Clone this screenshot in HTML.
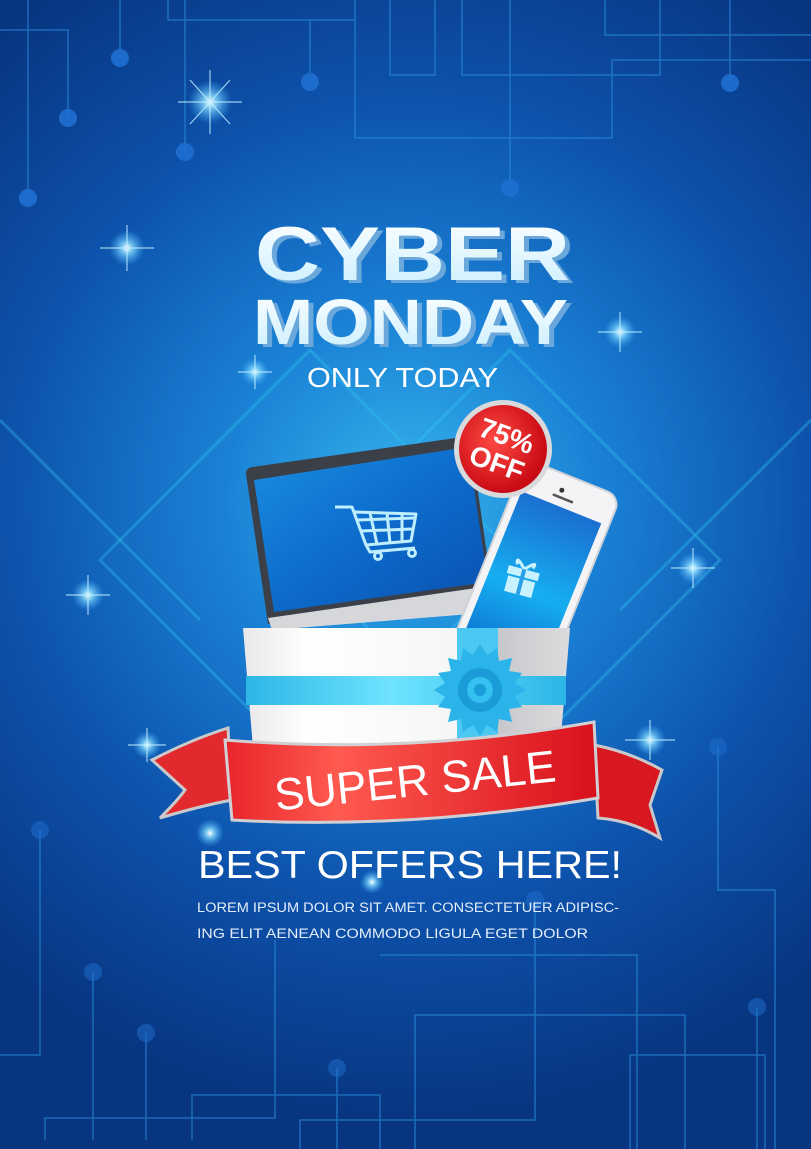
<!DOCTYPE html>
<html><head><meta charset="utf-8"><style>
html,body{margin:0;padding:0;background:#0b3d8c}
svg{display:block}
text{font-family:"Liberation Sans",Arial,sans-serif}
</style></head><body>
<svg width="811" height="1149" viewBox="0 0 811 1149" xmlns="http://www.w3.org/2000/svg">
<defs>
<radialGradient id="bg" cx="410" cy="500" r="620" gradientUnits="userSpaceOnUse">
<stop offset="0" stop-color="#36b4ec"/><stop offset="0.3" stop-color="#1a82d6"/><stop offset="0.65" stop-color="#0d52ac"/><stop offset="1" stop-color="#083580"/>
</radialGradient>
<radialGradient id="star" cx="0.5" cy="0.5" r="0.5"><stop offset="0" stop-color="#fff"/><stop offset="0.3" stop-color="#8fe0ff" stop-opacity="0.8"/><stop offset="1" stop-color="#3fb0ff" stop-opacity="0"/></radialGradient>
<linearGradient id="scr" x1="0" y1="0" x2="1" y2="1"><stop offset="0" stop-color="#1a8ee0"/><stop offset="0.5" stop-color="#0d6ccc"/><stop offset="1" stop-color="#0a4fae"/></linearGradient>
<linearGradient id="pscr" x1="0" y1="0" x2="0" y2="1"><stop offset="0" stop-color="#1a6fd0"/><stop offset="0.6" stop-color="#16aef0"/><stop offset="1" stop-color="#0f7bd6"/></linearGradient>
<linearGradient id="box" x1="0" y1="0" x2="1" y2="0"><stop offset="0" stop-color="#e8e8ea"/><stop offset="0.2" stop-color="#fff"/><stop offset="0.75" stop-color="#f4f4f4"/><stop offset="0.78" stop-color="#c8c8cc"/><stop offset="1" stop-color="#dcdcde"/></linearGradient>
<linearGradient id="band" x1="0" y1="0" x2="1" y2="0"><stop offset="0" stop-color="#2cb6e6"/><stop offset="0.45" stop-color="#6fe3ff"/><stop offset="1" stop-color="#2cb6e6"/></linearGradient>
<linearGradient id="red" x1="0" y1="0" x2="1" y2="0"><stop offset="0" stop-color="#e8242a"/><stop offset="0.3" stop-color="#ff5a50"/><stop offset="1" stop-color="#d8101c"/></linearGradient>
<radialGradient id="badge" cx="0.4" cy="0.4" r="0.6"><stop offset="0" stop-color="#ff4a44"/><stop offset="1" stop-color="#c80a14"/></radialGradient>
<linearGradient id="txt" x1="0" y1="0" x2="0" y2="1"><stop offset="0" stop-color="#ffffff"/><stop offset="1" stop-color="#c8eeff"/></linearGradient>
</defs>
<rect width="811" height="1149" fill="url(#bg)"/>
<g stroke="#35c8f0" stroke-opacity="0.35" stroke-width="3" fill="none">
<path d="M100 560 L310 350 L520 560 L310 770 Z"/>
<path d="M300 560 L510 350 L720 560 L510 770 Z"/>
<path d="M0 420 L200 620 M811 420 L620 610"/>
</g>
<g stroke="#2a8fe0" stroke-opacity="0.6" stroke-width="1.5" fill="none">
<path d="M28 0 V198 M0 30 H68 V118 M120 0 V58 M185 0 V152 M168 0 V20 H355 M310 20 V82 M355 0 V138 H612 V60 H811 M390 0 V75 H435 V0 M462 0 V75 H660 V0 M510 0 V188 M605 0 V35 H811 M730 0 V83"/>
<path d="M40 830 V1055 H0 M93 972 V1140 M146 1033 V1140 M45 1140 V1118 H275 V940 M192 1140 V1095 H380 V1149 M337 1068 V1149 M300 1149 V1120 H535 V900 M380 955 H637 V1149 M415 1149 V1015 H685 V1149 M630 1149 V1055 H765 V1149 M718 747 V890 H775 V1149 M757 1007 V1149"/>
</g>
<g fill="#1f6fd0" fill-opacity="0.9">
<circle cx="28" cy="198" r="9"/><circle cx="68" cy="118" r="9"/><circle cx="120" cy="58" r="9"/><circle cx="185" cy="152" r="9"/><circle cx="310" cy="82" r="9"/><circle cx="510" cy="188" r="9"/><circle cx="730" cy="83" r="9"/>
<circle cx="40" cy="830" r="9" fill-opacity="0.5"/><circle cx="93" cy="972" r="9" fill-opacity="0.5"/><circle cx="146" cy="1033" r="9" fill-opacity="0.5"/><circle cx="337" cy="1068" r="9" fill-opacity="0.5"/><circle cx="718" cy="747" r="9" fill-opacity="0.5"/><circle cx="757" cy="1007" r="9" fill-opacity="0.5"/><circle cx="535" cy="900" r="9" fill-opacity="0.5"/>
</g>
<g fill="url(#star)">
<circle cx="210" cy="102" r="22"/><circle cx="127" cy="248" r="18"/><circle cx="620" cy="332" r="16"/><circle cx="255" cy="372" r="14"/><circle cx="88" cy="595" r="16"/><circle cx="693" cy="568" r="16"/><circle cx="147" cy="745" r="14"/><circle cx="650" cy="740" r="16"/><circle cx="210" cy="833" r="14"/><circle cx="372" cy="882" r="12"/>
</g>
<g stroke="#bfefff" stroke-width="1.2" stroke-opacity="0.8">
<path d="M210 70 V134 M178 102 H242 M190 80 L230 124 M230 80 L190 124"/>
<path d="M127 225 V271 M100 248 H154"/><path d="M620 312 V352 M598 332 H642"/><path d="M88 575 V615 M66 595 H110"/><path d="M693 548 V588 M671 568 H715"/><path d="M650 720 V760 M625 740 H675"/><path d="M147 728 V762 M128 745 H166"/><path d="M255 355 V389 M238 372 H272"/>
</g>
<g font-weight="bold">
<text x="260" y="283" font-size="76" fill="#6aa8dc" textLength="315" lengthAdjust="spacingAndGlyphs">CYBER</text>
<text x="255" y="280" font-size="76" fill="url(#txt)" textLength="315" lengthAdjust="spacingAndGlyphs">CYBER</text>
<text x="258" y="347" font-size="64" fill="#6aa8dc" textLength="315" lengthAdjust="spacingAndGlyphs">MONDAY</text>
<text x="253" y="344" font-size="64" fill="url(#txt)" textLength="315" lengthAdjust="spacingAndGlyphs">MONDAY</text>
</g>
<text x="307" y="387" font-size="28" fill="#fff" textLength="191" lengthAdjust="spacingAndGlyphs">ONLY TODAY</text>
<path d="M246 474 Q246 468 252 467 L470 436 L492 590 L268 624 Z" fill="#3a3f48"/>
<path d="M254 480 L468 447 L488 582 L274 612 Z" fill="url(#scr)"/>
<path d="M268 618 L490 586 L495 612 L272 630 Z" fill="#d5d7da"/>
<g stroke="#bfefff" stroke-width="3" fill="none" stroke-linejoin="round">
<path d="M335 507 L352 507 L366 545 L411 541 L416 514 L355 512"/>
<path d="M358 520 L414 518 M361 531 L412 529 M370 513 L377 544 M387 513 L390 543 M402 513 L402 542"/>
<path d="M366 545 L370 552 L415 548"/><circle cx="378" cy="556" r="3.5"/><circle cx="412" cy="553" r="3.5"/>
</g>
<g transform="rotate(22 535 570)">
<rect x="485" y="470" width="102" height="200" rx="14" fill="#f4f4f6" stroke="#cfd2d6" stroke-width="2"/>
<rect x="493" y="502" width="86" height="150" fill="url(#pscr)"/>
<circle cx="530" cy="486" r="2.5" fill="#333"/><rect x="523" y="492" width="22" height="2.5" rx="1" fill="#555"/>
</g>
<g fill="#c8f2ff" transform="rotate(15 522 578)">
<rect x="506" y="569" width="32" height="8"/><rect x="508" y="579" width="28" height="16"/><path d="M522 569 Q510 556 514 566 M522 569 Q534 556 530 566" stroke="#c8f2ff" stroke-width="3" fill="none"/>
<rect x="520" y="569" width="4" height="26" fill="#2aa0e8"/>
</g>
<circle cx="503" cy="449" r="49" fill="#d9dadc"/>
<circle cx="503" cy="449" r="44" fill="url(#badge)"/>
<g transform="rotate(20 503 449)" fill="#fff" font-weight="bold" text-anchor="middle">
<text x="502" y="445" font-size="28">75%</text><text x="502" y="474" font-size="28">OFF</text></g>
<path d="M243 628 L570 628 L560 748 L253 748 Z" fill="url(#box)"/>
<rect x="246" y="676" width="320" height="29" fill="url(#band)"/>
<rect x="457" y="628" width="41" height="120" fill="#4cc9f2"/>
<g transform="translate(480 690)">
<path d="M0 -46 L7 -35 L17 -42 L19 -29 L32 -32 L29 -19 L42 -17 L35 -7 L46 0 L35 7 L42 17 L29 19 L32 32 L19 29 L17 42 L7 35 L0 46 L-7 35 L-17 42 L-19 29 L-32 32 L-29 19 L-42 17 L-35 7 L-46 0 L-35 -7 L-42 -17 L-29 -19 L-32 -32 L-19 -29 L-17 -42 L-7 -35 Z" fill="#2ab4ea"/>
<circle r="22" fill="#1a9cd8"/><circle r="13" fill="#34c0f0"/><circle r="6" fill="#1a9cd8"/>
</g>
<path d="M152 760 Q190 740 228 728 L232 800 Q200 806 160 818 Q178 800 185 790 Z" fill="#e22a2e" stroke="#c9c9cc" stroke-width="3"/>
<path d="M594 745 Q630 752 662 770 L650 805 L660 838 Q630 820 598 818 Z" fill="#d81820" stroke="#c9c9cc" stroke-width="3"/>
<path d="M225 740 Q410 755 594 722 L598 798 Q410 830 232 820 Z" fill="url(#red)" stroke="#d0d0d4" stroke-width="3"/>
<text x="415" y="796" font-size="45" fill="#fff" text-anchor="middle" transform="rotate(-6 415 780)">SUPER SALE</text>
<text x="198" y="878" font-size="39" fill="#fff" textLength="424" lengthAdjust="spacingAndGlyphs">BEST OFFERS HERE!</text>
<text x="197" y="912" font-size="13.5" fill="#e4eefa" textLength="422" lengthAdjust="spacingAndGlyphs">LOREM IPSUM DOLOR SIT AMET. CONSECTETUER ADIPISC-</text>
<text x="197" y="938" font-size="13.5" fill="#e4eefa" textLength="391" lengthAdjust="spacingAndGlyphs">ING ELIT  AENEAN COMMODO LIGULA EGET DOLOR</text>
</svg>
</body></html>
